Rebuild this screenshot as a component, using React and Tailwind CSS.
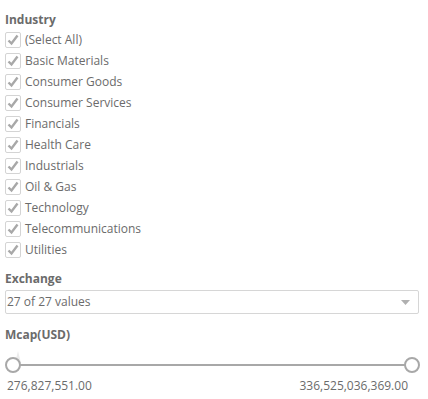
import React from "react";

const industries = [
  "(Select All)",
  "Basic Materials",
  "Consumer Goods",
  "Consumer Services",
  "Financials",
  "Health Care",
  "Industrials",
  "Oil & Gas",
  "Technology",
  "Telecommunications",
  "Utilities",
];

function CheckRow({ label }) {
  return (
    <label className="flex items-center h-[21px] gap-[4px]">
      <span className="w-[16px] h-[16px] border border-[#d4d4d4] rounded-[2px] bg-white flex items-center justify-center">
        <svg width="14" height="14" viewBox="0 0 14 14">
          <path d="M2.5 7.5 L5.5 10.5 L11.5 2.5" fill="none" stroke="#a8a8a8" strokeWidth="2.4" />
        </svg>
      </span>
      <span className="text-[12px] text-[#6b6b6b]">{label}</span>
    </label>
  );
}

export default function App() {
  return (
    <div className="w-[428px] h-[399px] bg-white px-[5px] pt-[11px] font-['Open_Sans',sans-serif]">
      <div className="text-[12px] font-bold text-[#6b6b6b] leading-[18px]">Industry</div>
      <div className="flex flex-col">
        {industries.map((name) => (
          <CheckRow key={name} label={name} />
        ))}
      </div>

      <div className="mt-[10px] text-[12px] font-bold text-[#6b6b6b] leading-[18px]">Exchange</div>
      <div className="mt-[2px] w-[414px] h-[24px] border border-[#d6d6d6] rounded-[2px] flex items-center justify-between pl-[1px] pr-[8px]">
        <span className="text-[12px] text-[#6b6b6b]">27 of 27 values</span>
        <svg width="9" height="5" viewBox="0 0 9 5">
          <path d="M0 0 L9 0 L4.5 5 Z" fill="#b0b0b0" />
        </svg>
      </div>

      <div className="mt-[12px] text-[12px] font-bold text-[#6b6b6b] leading-[18px]">Mcap(USD)</div>
      <div className="relative mt-[7px] h-[22px] w-[415px]">
        <div className="absolute left-[10px] top-[0px] w-0 h-0 border-l-[3px] border-l-transparent border-r-[3px] border-r-transparent border-b-[12px] border-b-[#ececec]" />
        <div className="absolute left-[8px] right-[8px] top-[13px] h-[2px] bg-[#a8a8a8]" />
        <div className="absolute left-0 top-[6px] w-[16px] h-[16px] rounded-full border-2 border-[#a8a8a8] bg-white" />
        <div className="absolute right-0 top-[6px] w-[16px] h-[16px] rounded-full border-2 border-[#a8a8a8] bg-white" />
      </div>
      <div className="mt-[4px] flex justify-between w-[403px] pl-[2px] text-[12px] text-[#6b6b6b]">
        <span>276,827,551.00</span>
        <span>336,525,036,369.00</span>
      </div>
    </div>
  );
}
